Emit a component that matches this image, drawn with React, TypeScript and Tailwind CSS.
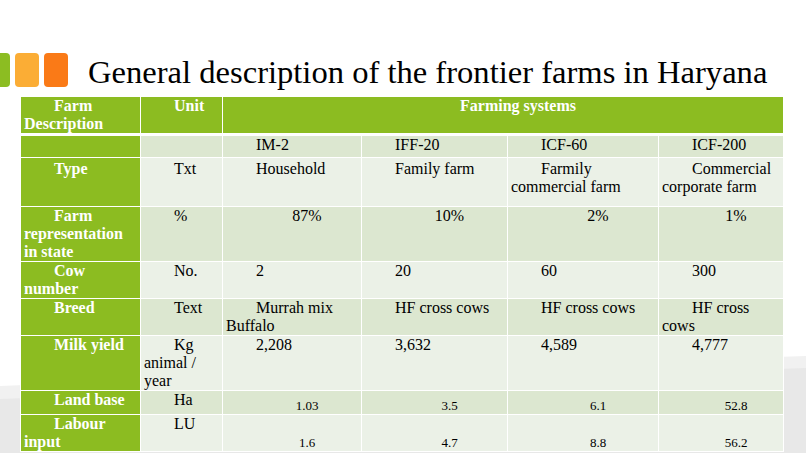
import React from "react";

type Row = {
  label: string;
  unit: string;
  cells: string[];
  dark: boolean;
  h: string;
  pad?: string;
  mode?: "left" | "center" | "small";
  smallPad?: string;
};

const rows: Row[] = [
  { label: "", unit: "", cells: ["IM-2", "IFF-20", "ICF-60", "ICF-200"], dark: true, h: "h-[23px]" },
  { label: "Type", unit: "Txt", cells: ["Household", "Family farm", "Farmily commercial farm", "Commercial corporate farm"], dark: false, h: "h-[49px]", pad: "pt-[2px]" },
  { label: "Farm representation in state", unit: "%", cells: ["87%", "10%", "2%", "1%"], dark: true, h: "h-[54px]", mode: "center" },
  { label: "Cow number", unit: "No.", cells: ["2", "20", "60", "300"], dark: false, h: "h-[35px]" },
  { label: "Breed", unit: "Text", cells: ["Murrah mix Buffalo", "HF cross cows", "HF cross cows", "HF cross cows"], dark: true, h: "h-[35px]" },
  { label: "Milk yield", unit: "Kg animal / year", cells: ["2,208", "3,632", "4,589", "4,777"], dark: false, h: "h-[55px]" },
  { label: "Land base", unit: "Ha", cells: ["1.03", "3.5", "6.1", "52.8"], dark: true, h: "h-[22px]", mode: "small", smallPad: "pt-[7px]" },
  { label: "Labour input", unit: "LU", cells: ["1.6", "4.7", "8.8", "56.2"], dark: false, h: "h-[37px]", mode: "small", smallPad: "pt-[20px]" },
];

function Squares() {
  return (
    <div className="flex gap-[5px] -ml-[14px] mt-[53px]">
      <div className="w-[24px] h-[34px] rounded-[4px] bg-[#8cbd22]" />
      <div className="w-[24px] h-[34px] rounded-[4px] bg-[#fbad35]" />
      <div className="w-[24px] h-[34px] rounded-[4px] bg-[#fa7a17]" />
    </div>
  );
}

function Backdrop() {
  return (
    <svg className="absolute inset-0 w-[806px] h-[453px]" viewBox="0 0 806 453">
      <path d="M0 386 Q400 370 806 356 L806 453 L0 453 Z" fill="#f1f1f1" />
      <path d="M0 399 Q400 384 806 368 L806 453 L0 453 Z" fill="#e8e8e8" />
    </svg>
  );
}

export default function App() {
  const cell = "border border-white align-top px-[3px] indent-[30px] text-[16px] leading-[18px] text-black";
  return (
    <div
      className="relative w-[806px] h-[453px] overflow-hidden bg-white"
      style={{ fontFamily: '"Liberation Serif", "Times New Roman", serif' }}
    >
      <Backdrop />
      <div className="relative flex items-start">
        <Squares />
        <h1 className="ml-[20px] mt-[52px] text-[32.6px] leading-[40px] font-normal text-black whitespace-nowrap">
          General description of the frontier farms in Haryana
        </h1>
      </div>
      <table className="relative ml-[20px] mt-[4px] w-[763px] table-fixed border-collapse">
        <colgroup>
          <col className="w-[120px]" />
          <col className="w-[82px]" />
          <col className="w-[139px]" />
          <col className="w-[146px]" />
          <col className="w-[151px]" />
          <col className="w-[125px]" />
        </colgroup>
        <thead>
          <tr className="bg-[#8cbc21] border-b-[3px] border-white">
            <th className="border border-white align-top px-[3px] indent-[30px] text-left text-[16px] leading-[18px] font-bold text-white h-[33px]">
              Farm Description
            </th>
            <th className="border border-white align-top px-[3px] indent-[30px] text-left text-[16px] leading-[18px] font-bold text-white">
              Unit
            </th>
            <th colSpan={4} className="border border-white align-top px-[3px] indent-[30px] text-center text-[16px] leading-[18px] font-bold text-white">
              Farming systems
            </th>
          </tr>
        </thead>
        <tbody>
          {rows.map((r, i) => (
            <tr key={i} className={r.dark ? "bg-[#dce7d0]" : "bg-[#ebf1e7]"}>
              <td className={`border border-white align-top px-[3px] indent-[30px] text-[16px] leading-[18px] font-bold text-white bg-[#8cbc21] ${r.h} ${r.pad ?? ""}`}>
                {r.label}
              </td>
              <td className={`${cell} ${r.pad ?? ""} text-left`}>{r.unit}</td>
              {r.cells.map((c, j) => (
                <td
                  key={j}
                  className={
                    r.mode === "small"
                      ? `border border-white align-top px-[3px] indent-[30px] text-center text-[13px] leading-[16px] text-black ${r.smallPad}`
                      : r.mode === "center"
                      ? `${cell} text-center`
                      : `${cell} ${r.pad ?? ""} text-left`
                  }
                >
                  {c}
                </td>
              ))}
            </tr>
          ))}
        </tbody>
      </table>
    </div>
  );
}
